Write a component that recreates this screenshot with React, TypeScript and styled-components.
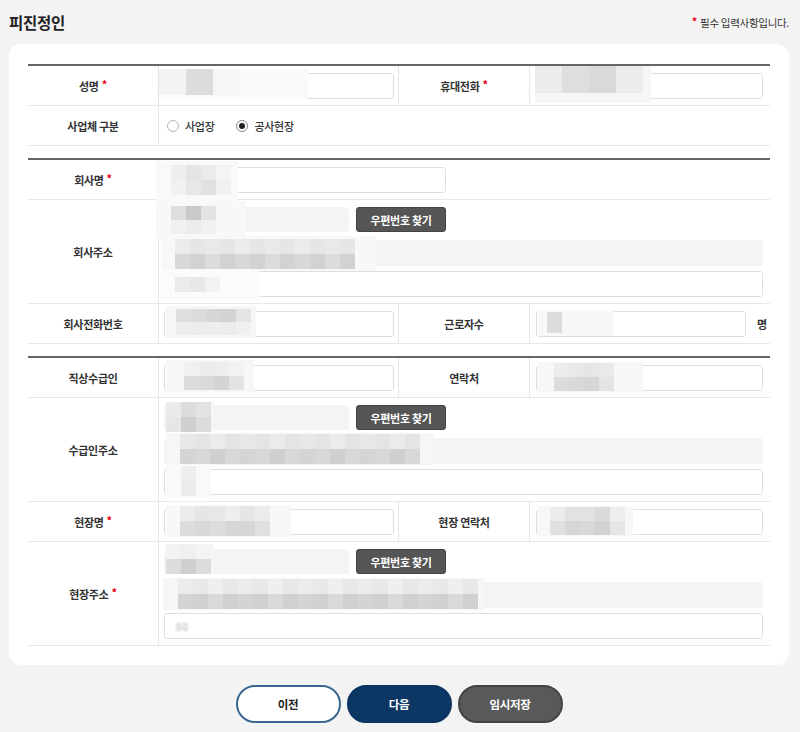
import React from "react";
import styled, { createGlobalStyle } from "styled-components";

const GlobalStyle = createGlobalStyle`
  html, body {
    margin: 0;
    padding: 0;
    background: #f3f3f3;
  }
  body {
    font-family: "Noto Sans CJK KR", "Noto Sans", sans-serif;
    color: #333;
  }
  * { box-sizing: border-box; }
`;

const Page = styled.div`
  width: 800px;
  padding: 0 11px 8px 9px;
`;

const Header = styled.div`
  height: 44px;
  display: flex;
  align-items: center;
  justify-content: space-between;
`;

const Title = styled.h2`
  margin: 0;
  font-size: 15.5px;
  font-weight: 700;
  color: #222;
  letter-spacing: -0.3px;
`;

const Notice = styled.div`
  font-size: 10.5px;
  color: #333;
  letter-spacing: -0.3px;
`;

const Star = styled.span`
  color: #e60012;
  font-weight: 700;
  margin-left: 3px;
  font-size: 11px;
  position: relative;
  top: -2px;
`;

const NoticeStar = styled(Star)`
  margin: 0 3px 0 0;
  top: -1px;
`;

const Card = styled.div`
  background: #fff;
  border-radius: 12px;
  padding: 20px 19px 19px 19px;
`;

const Section = styled.div`
  border-top: 2px solid #666;
  & + & {
    margin-top: 12px;
  }
`;

const Row = styled.div<{ $full?: boolean }>`
  display: grid;
  grid-template-columns: ${(p) => (p.$full ? "130px 1fr" : "130px 240px 131px 1fr")};
  min-height: 40px;
  border-bottom: 1px solid #e8e8e8;
`;

const Label = styled.div`
  display: flex;
  align-items: center;
  justify-content: center;
  font-size: 11px;
  font-weight: 700;
  color: #333;
  letter-spacing: -0.3px;
`;

const SideLabel = styled(Label)`
  border-left: 1px solid #e6e6e6;
`;

const Cell = styled.div<{ $right?: boolean; $span?: boolean }>`
  display: flex;
  align-items: center;
  gap: 11px;
  border-left: 1px solid #e6e6e6;
  padding: ${(p) => (p.$right ? "0 7px 0 6px" : "0 6px 0 5px")};
  grid-column: ${(p) => (p.$span ? "span 3" : "auto")};
`;

const AddressCell = styled.div`
  border-left: 1px solid #e6e6e6;
  padding: 7px 7px 6px 5px;
  display: flex;
  flex-direction: column;
  grid-column: span 3;
`;

const ZipLine = styled.div`
  display: flex;
  gap: 7px;
  align-items: center;
`;

const Field = styled.div<{ $w?: number; $mt?: number }>`
  position: relative;
  width: ${(p) => (p.$w ? `${p.$w}px` : "100%")};
  margin-top: ${(p) => p.$mt ?? 0}px;
  flex-shrink: 0;
`;

const Input = styled.div<{ $readonly?: boolean; $h?: number }>`
  height: ${(p) => p.$h ?? 26}px;
  border-radius: 3px;
  border: 1px solid ${(p) => (p.$readonly ? "#f4f4f4" : "#dedede")};
  background: ${(p) => (p.$readonly ? "#f4f4f4" : "#fff")};
`;

const Mosaic = styled.div<{
  $x: number;
  $y: number;
  $w: number;
  $h: number;
  $bg: string;
  $px: number;
  $py: number;
}>`
  position: absolute;
  left: ${(p) => p.$x}px;
  top: ${(p) => p.$y}px;
  width: ${(p) => p.$w}px;
  height: ${(p) => p.$h}px;
  background: ${(p) => p.$bg};
  padding: ${(p) => `${p.$py}px 0 0 ${p.$px}px`};
  overflow: hidden;
`;

const MosaicRow = styled.div<{ $ch: number }>`
  display: flex;
  height: ${(p) => p.$ch}px;
`;

const Tile = styled.div<{ $c: string; $cw: number }>`
  flex: 0 0 ${(p) => p.$cw}px;
  background: ${(p) => p.$c};
`;

const BlurText = styled.span`
  position: absolute;
  left: 12px;
  top: 6px;
  font-size: 10px;
  color: #aaa;
  filter: blur(1.3px);
  letter-spacing: 1px;
`;

const ZipButton = styled.button`
  width: 90px;
  height: 25px;
  border: 1px solid #444;
  border-radius: 3px;
  background: #555;
  color: #fff;
  font-family: inherit;
  font-size: 11px;
  font-weight: 700;
  letter-spacing: -0.3px;
  padding: 0;
  cursor: pointer;
`;

const Unit = styled.span`
  font-size: 11px;
  font-weight: 700;
  color: #333;
`;

const RadioGroup = styled.div`
  display: flex;
  align-items: center;
  gap: 22px;
  padding-left: 3px;
`;

const RadioItem = styled.label`
  display: flex;
  align-items: center;
  gap: 6px;
  font-size: 11px;
  font-weight: 500;
  color: #333;
  letter-spacing: -0.3px;
`;

const RadioMark = styled.span<{ $on?: boolean }>`
  width: 12px;
  height: 12px;
  border-radius: 50%;
  border: 1px solid ${(p) => (p.$on ? "#888" : "#b5b5b5")};
  background: #fff;
  display: flex;
  align-items: center;
  justify-content: center;
  &::after {
    content: "";
    width: 6px;
    height: 6px;
    border-radius: 50%;
    background: ${(p) => (p.$on ? "#222" : "transparent")};
  }
`;

const Actions = styled.div`
  display: flex;
  justify-content: center;
  gap: 6px;
  margin-top: 20px;
`;

const ActionButton = styled.button<{ $kind: "prev" | "next" | "save" }>`
  width: 105px;
  height: 38px;
  border-radius: 19px;
  font-family: inherit;
  font-size: 11.5px;
  font-weight: 700;
  letter-spacing: -0.3px;
  cursor: pointer;
  border: 2px solid
    ${(p) => (p.$kind === "prev" ? "#3a6690" : p.$kind === "next" ? "#0b3560" : "#444")};
  background: ${(p) => (p.$kind === "prev" ? "#fff" : p.$kind === "next" ? "#0c3764" : "#595959")};
  color: ${(p) => (p.$kind === "prev" ? "#222" : "#fff")};
`;

type Patch = {
  x: number;
  y: number;
  w: number;
  h: number;
  bg: string;
  px: number;
  py: number;
  cw: number;
  ch: number;
  rows: string[][];
};

const Masked = ({ p }: { p: Patch }) => (
  <Mosaic $x={p.x} $y={p.y} $w={p.w} $h={p.h} $bg={p.bg} $px={p.px} $py={p.py}>
    {p.rows.map((r, i) => (
      <MosaicRow key={i} $ch={p.ch}>
        {r.map((c, j) => (
          <Tile key={j} $c={c} $cw={p.cw} />
        ))}
      </MosaicRow>
    ))}
  </Mosaic>
);

const TextField = ({ w, mt, readonly, patch, children }: {
  w?: number;
  mt?: number;
  readonly?: boolean;
  patch?: Patch;
  children?: React.ReactNode;
}) => (
  <Field $w={w} $mt={mt}>
    <Input $readonly={readonly} />
    {patch && <Masked p={patch} />}
    {children}
  </Field>
);

const ZipField = ({ patch }: { patch: Patch }) => (
  <ZipLine>
    <Field $w={185}>
      <Input $readonly $h={25} />
      <Masked p={patch} />
    </Field>
    <ZipButton>우편번호 찾기</ZipButton>
  </ZipLine>
);

// blurred address strips: alternate a few greys so it reads like a pixelated text line
const strip = (n: number, a: string, b: string, c: string) =>
  Array.from({ length: n }, (_, i) => [a, b, c, b][i % 4]);

const P = {
  name: { x: -5, y: -4, w: 149, h: 30, bg: "#fafafa", px: 0, py: 0, cw: 27, ch: 26, rows: [["#f3f3f3", "#dcdcdc", "#f6f6f6"]] },
  phone: { x: -1, y: -7, w: 116, h: 37, bg: "#f6f6f6", px: 0, py: 0, cw: 27, ch: 27, rows: [["#ececec", "#dedede", "#d9d9d9", "#ececec"]] },
  company: { x: -8, y: -6, w: 82, h: 40, bg: "#f9f9f9", px: 15, py: 4, cw: 15, ch: 15, rows: [["#eeeeee", "#e5e5e5", "#ebebeb", "#f4f4f4"], ["#f1f1f1", "#e7e7e7", "#e1e1e1", "#f1f1f1"]] },
  cZip: { x: -8, y: -6, w: 90, h: 38, bg: "#f8f8f8", px: 15, py: 5, cw: 15, ch: 14, rows: [["#dedede", "#c9c9c9", "#e3e3e3"], ["#f0f0f0", "#ececec", "#f1f1f1"]] },
  cAddr: { x: -3, y: -4, w: 215, h: 35, bg: "#f8f8f8", px: 14, py: 3, cw: 15, ch: 15, rows: [strip(12, "#ececec", "#e6e6e6", "#e9e9e9"), strip(12, "#d8d8d8", "#d2d2d2", "#dcdcdc")] },
  cDetail: { x: -3, y: -2, w: 98, h: 32, bg: "#fbfbfb", px: 14, py: 8, cw: 15, ch: 15, rows: [["#ebebeb", "#e8e8e8", "#f2f2f2"]] },
  cTel: { x: 2, y: -5, w: 90, h: 32, bg: "#f6f6f6", px: 10, py: 3, cw: 15, ch: 13, rows: [["#dedede", "#dcdcdc", "#d6d6d6", "#d2d2d2", "#e4e4e4"], ["#eeeeee", "#ececec", "#eeeeee", "#ececec", "#f0f0f0"]] },
  workers: { x: 2, y: -1, w: 76, h: 26, bg: "#f8f8f8", px: 9, py: 2, cw: 15, ch: 21, rows: [["#dcdcdc"]] },
  boss: { x: 2, y: -5, w: 88, h: 32, bg: "#f7f7f7", px: 18, py: 2, cw: 15, ch: 14, rows: [["#f0f0f0", "#ececec", "#eeeeee", "#f2f2f2"], ["#dcdcdc", "#d9d9d9", "#d4d4d4", "#e3e3e3"]] },
  contact: { x: 1, y: -3, w: 106, h: 30, bg: "#f7f7f7", px: 17, py: 1, cw: 15, ch: 14, rows: [["#ececec", "#e8e8e8", "#e6e6e6", "#eaeaea"], ["#dcdcdc", "#d9d9d9", "#d6d6d6", "#e4e4e4"]] },
  rZip: { x: 2, y: -3, w: 48, h: 30, bg: "#f6f6f6", px: 0, py: 0, cw: 15, ch: 15, rows: [["#eaeaea", "#dddddd", "#e3e3e3"], ["#e6e6e6", "#cfcfcf", "#dcdcdc"]] },
  rAddr: { x: 2, y: -5, w: 268, h: 32, bg: "#f6f6f6", px: 14, py: 1, cw: 15, ch: 15, rows: [strip(16, "#e8e8e8", "#e4e4e4", "#ebebeb"), strip(16, "#d4d4d4", "#d8d8d8", "#cfcfcf")] },
  rDetail: { x: 2, y: -3, w: 45, h: 32, bg: "#f9f9f9", px: 15, py: 0, cw: 15, ch: 15, rows: [["#eeeeee"], ["#ececec"]] },
  site: { x: 2, y: -4, w: 125, h: 32, bg: "#f8f8f8", px: 14, py: 1, cw: 15, ch: 15, rows: [["#ececec", "#e6e6e6", "#e8e8e8", "#eeeeee", "#e6e6e6", "#ececec"], ["#dcdcdc", "#d8d8d8", "#dcdcdc", "#d6d6d6", "#d6d6d6", "#e0e0e0"]] },
  siteTel: { x: 1, y: -3, w: 96, h: 30, bg: "#f7f7f7", px: 13, py: 1, cw: 15, ch: 14, rows: [["#ececec", "#e2e2e2", "#e2e2e2", "#dadada", "#eeeeee"], ["#e0e0e0", "#d6d6d6", "#d8d8d8", "#d2d2d2", "#e6e6e6"]] },
  sZip: { x: 2, y: -5, w: 48, h: 30, bg: "#f6f6f6", px: 0, py: 0, cw: 15, ch: 15, rows: [["#f2f2f2", "#f0f0f0", "#f4f4f4"], ["#dcdcdc", "#cfcfcf", "#dcdcdc"]] },
  sAddr: { x: -1, y: -4, w: 322, h: 32, bg: "#f6f6f6", px: 15, py: 1, cw: 15, ch: 15, rows: [strip(20, "#ececec", "#e8e8e8", "#efefef"), strip(20, "#d4d4d4", "#d0d0d0", "#d9d9d9")] },
} satisfies Record<string, Patch>;

export default function App() {
  return (
    <Page>
      <GlobalStyle />
      <Header>
        <Title>피진정인</Title>
        <Notice>
          <NoticeStar>*</NoticeStar>필수 입력사항입니다.
        </Notice>
      </Header>

      <Card>
        <Section>
          <Row>
            <Label>
              성명<Star>*</Star>
            </Label>
            <Cell>
              <TextField w={230} patch={P.name} />
            </Cell>
            <SideLabel>
              휴대전화<Star>*</Star>
            </SideLabel>
            <Cell $right>
              <TextField patch={P.phone} />
            </Cell>
          </Row>
          <Row $full>
            <Label>사업체 구분</Label>
            <Cell>
              <RadioGroup>
                <RadioItem>
                  <RadioMark />
                  사업장
                </RadioItem>
                <RadioItem>
                  <RadioMark $on />
                  공사현장
                </RadioItem>
              </RadioGroup>
            </Cell>
          </Row>
        </Section>

        <Section>
          <Row>
            <Label>
              회사명<Star>*</Star>
            </Label>
            <Cell $span>
              <TextField w={282} patch={P.company} />
            </Cell>
          </Row>
          <Row>
            <Label>회사주소</Label>
            <AddressCell>
              <ZipField patch={P.cZip} />
              <TextField mt={8} readonly patch={P.cAddr} />
              <TextField mt={5} patch={P.cDetail} />
            </AddressCell>
          </Row>
          <Row>
            <Label>회사전화번호</Label>
            <Cell>
              <TextField w={230} patch={P.cTel} />
            </Cell>
            <SideLabel>근로자수</SideLabel>
            <Cell $right>
              <TextField w={210} patch={P.workers} />
              <Unit>명</Unit>
            </Cell>
          </Row>
        </Section>

        <Section>
          <Row>
            <Label>직상수급인</Label>
            <Cell>
              <TextField w={230} patch={P.boss} />
            </Cell>
            <SideLabel>연락처</SideLabel>
            <Cell $right>
              <TextField patch={P.contact} />
            </Cell>
          </Row>
          <Row>
            <Label>수급인주소</Label>
            <AddressCell>
              <ZipField patch={P.rZip} />
              <TextField mt={8} readonly patch={P.rAddr} />
              <TextField mt={5} patch={P.rDetail} />
            </AddressCell>
          </Row>
          <Row>
            <Label>
              현장명<Star>*</Star>
            </Label>
            <Cell>
              <TextField w={230} patch={P.site} />
            </Cell>
            <SideLabel>현장 연락처</SideLabel>
            <Cell $right>
              <TextField patch={P.siteTel} />
            </Cell>
          </Row>
          <Row>
            <Label>
              현장주소<Star>*</Star>
            </Label>
            <AddressCell>
              <ZipField patch={P.sZip} />
              <TextField mt={8} readonly patch={P.sAddr} />
              <TextField mt={5}>
                <BlurText>00</BlurText>
              </TextField>
            </AddressCell>
          </Row>
        </Section>
      </Card>

      <Actions>
        <ActionButton $kind="prev">이전</ActionButton>
        <ActionButton $kind="next">다음</ActionButton>
        <ActionButton $kind="save">임시저장</ActionButton>
      </Actions>
    </Page>
  );
}
